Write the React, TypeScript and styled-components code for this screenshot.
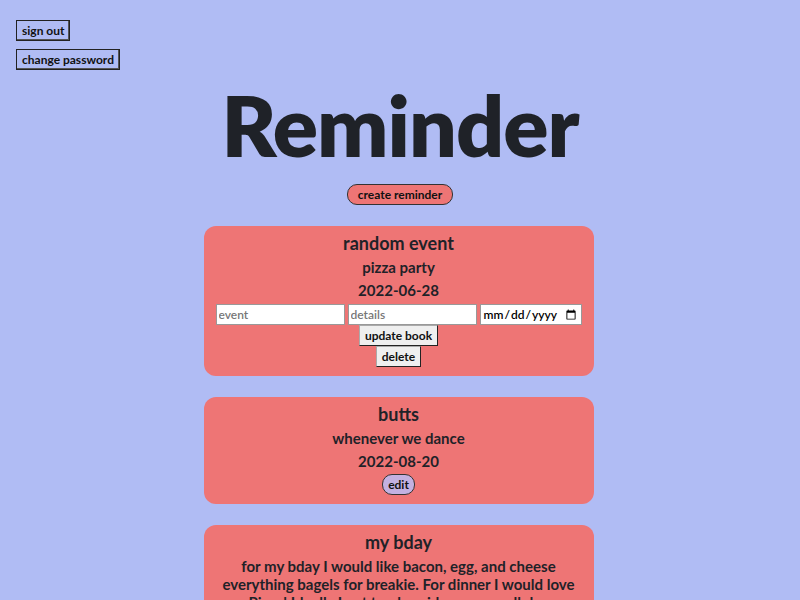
import React from "react";
import styled, { createGlobalStyle } from "styled-components";

const Global = createGlobalStyle`
  html, body { background: #b0bcf4; }
  body { margin: 8px; font-family: "Lato", "Noto Sans", sans-serif; color: #1f2228; }
`;

const TopBar = styled.div`
  display: flex;
  flex-direction: column;
  align-items: flex-start;
  gap: 8px;
  padding-top: 12px;
  padding-left: 8px;
`;

const SquareButton = styled.button`
  font-family: "Lato", sans-serif;
  font-weight: 700;
  font-size: 12px;
  color: #111;
  background: transparent;
  border: 1px solid #222;
  box-shadow: inset -1px -1px 0 #555;
  padding: 2px 5px;
  height: 21px;
  cursor: pointer;
`;

const Title = styled.h1`
  margin: 5px 0 0;
  text-align: center;
  font-family: "Lato", sans-serif;
  font-weight: 800;
  font-size: 84px;
  line-height: 100px;
  letter-spacing: -1px;
  color: #1f2228;
`;

const Center = styled.div`
  display: flex;
  justify-content: center;
`;

const PillButton = styled.button<{ $bg: string; $px: number }>`
  font-family: "Lato", sans-serif;
  font-weight: 700;
  font-size: 12px;
  color: #111;
  background: ${(p) => p.$bg};
  border: 1px solid #333;
  border-radius: 10px;
  padding: 2px ${(p) => p.$px}px;
  height: 21px;
`;

const CreateWrap = styled(Center)`
  margin-top: 9px;
`;

const List = styled.div`
  display: flex;
  flex-direction: column;
  align-items: center;
  gap: 21px;
  margin-top: 21px;
  padding-right: 3px;
`;

const Card = styled.div`
  width: 390px;
  background: #ee7575;
  border-radius: 12px;
  padding: 6px 0 9px;
  display: flex;
  flex-direction: column;
  align-items: center;
  text-align: center;
`;

const CardTitle = styled.div`
  font-size: 18px;
  font-weight: 700;
  line-height: 22px;
  margin-bottom: 3px;
`;

const CardText = styled.div`
  font-size: 15px;
  font-weight: 700;
  line-height: 18px;
  padding: 1px 16px;
  margin-bottom: 3px;
`;

const FormRow = styled.div`
  display: flex;
  gap: 3px;
  margin-top: 1px;
`;

const Input = styled.input<{ $w: number }>`
  width: ${(p) => p.$w}px;
  height: 21px;
  box-sizing: border-box;
  font-family: "Lato", sans-serif;
  font-size: 12px;
  font-weight: 600;
  border: 1px solid #999;
  padding: 1px 2px;
  &::placeholder { color: #777; }
`;

const GreyButton = styled.button`
  font-family: "Lato", sans-serif;
  font-weight: 700;
  font-size: 12px;
  color: #111;
  background: #efefef;
  border: 1px solid #222;
  border-top-color: #aaa;
  border-left-color: #aaa;
  padding: 1px 5px;
  height: 21px;
`;

const Stack = styled.div`
  display: flex;
  flex-direction: column;
  align-items: center;
`;

export default function App() {
  return (
    <>
      <Global />
      <TopBar>
        <SquareButton>sign out</SquareButton>
        <SquareButton>change password</SquareButton>
      </TopBar>
      <Title>Reminder</Title>
      <CreateWrap>
        <PillButton $bg="#ee7575" $px={10}>create reminder</PillButton>
      </CreateWrap>
      <List>
        <Card>
          <CardTitle>random event</CardTitle>
          <CardText>pizza party</CardText>
          <CardText>2022-06-28</CardText>
          <FormRow>
            <Input $w={129} placeholder="event" />
            <Input $w={129} placeholder="details" />
            <Input $w={102} type="date" />
          </FormRow>
          <Stack>
            <GreyButton>update book</GreyButton>
            <GreyButton>delete</GreyButton>
          </Stack>
        </Card>
        <Card>
          <CardTitle>butts</CardTitle>
          <CardText>whenever we dance</CardText>
          <CardText>2022-08-20</CardText>
          <PillButton $bg="#c3b1e1" $px={5}>edit</PillButton>
        </Card>
        <Card>
          <CardTitle>my bday</CardTitle>
          <CardText>
            for my bday I would like bacon, egg, and cheese everything bagels for breakie. For dinner I would love Pizza! Ideally I get to play video games all day
          </CardText>
        </Card>
      </List>
    </>
  );
}
